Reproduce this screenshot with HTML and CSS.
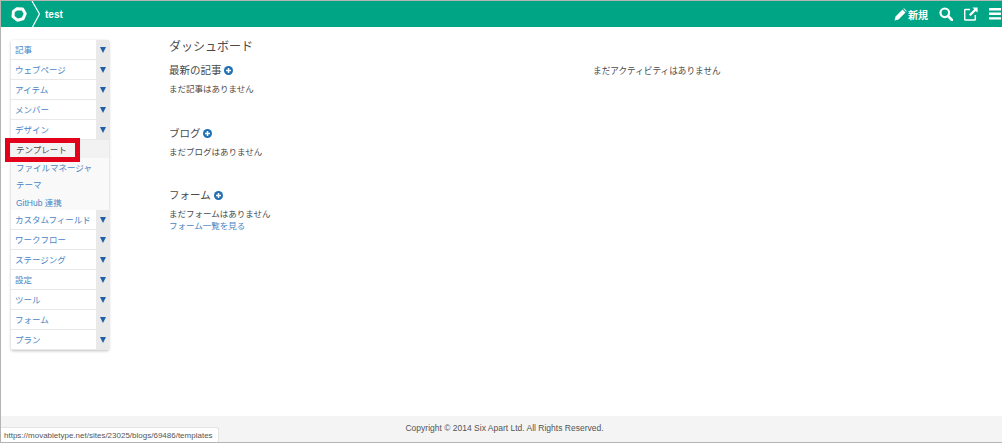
FILE: index.html
```html
<!DOCTYPE html>
<html lang="ja">
<head>
<meta charset="utf-8">
<title>test</title>
<link rel="stylesheet" href="styles.css">
</head>
<body>
<div class="frame">
  <header class="topbar">
    <div class="brand">
      <svg class="logo" width="16" height="15" viewBox="0 0 16 15"><path d="M6 1.8 11.6 1.9 14.2 6.6 12 11.8 6.4 13.2 2 9.6 2.4 4.4Z" fill="none" stroke="#fff" stroke-width="3" stroke-linejoin="round"/></svg>
      <svg class="chev" width="12" height="26" viewBox="0 0 12 26"><path d="M1 0 8.5 13 1.5 26" fill="none" stroke="#fff" stroke-width="1.2"/></svg>
      <span class="site">test</span>
    </div>
    <div class="tools">
      <span class="new">
        <svg width="13" height="13" viewBox="0 0 13 13"><path d="M0.5 12.5 1.5 8.5 8.5 1.5 11.5 4.5 4.5 11.5Z M9.3 0.8 10 0.3 12.7 3 12.2 3.7Z" fill="#fff"/></svg>
        新規
      </span>
      <svg class="ico" width="14" height="14" viewBox="0 0 14 14"><circle cx="5.8" cy="5.8" r="4.3" fill="none" stroke="#fff" stroke-width="2.2"/><path d="M9 9 13 13" stroke="#fff" stroke-width="2.6" stroke-linecap="round"/></svg>
      <svg class="ico" width="14" height="14" viewBox="0 0 14 14"><path d="M6 2.5H1.5a.8.8 0 0 0-.8.8v9a.8.8 0 0 0 .8.8h9a.8.8 0 0 0 .8-.8V8" fill="none" stroke="#fff" stroke-width="1.5"/><path d="M8.5 0.5H13.6V5.6L11.8 3.9 6.6 9.1 5 7.5 10.2 2.3Z" fill="#fff"/></svg>
      <svg class="ico" width="12" height="12" viewBox="0 0 12 12"><path d="M0 0h12v2.4H0zM0 4.6h12V7H0zM0 9.2h12v2.4H0z" fill="#fff"/></svg>
    </div>
  </header>

  <div class="content">
    <nav class="side">
      <a class="item"><span>記事</span><i class="drop"><b></b></i></a>
      <a class="item"><span>ウェブページ</span><i class="drop"><b></b></i></a>
      <a class="item"><span>アイテム</span><i class="drop"><b></b></i></a>
      <a class="item"><span>メンバー</span><i class="drop"><b></b></i></a>
      <a class="item"><span>デザイン</span><i class="drop"><b></b></i></a>
      <div class="sub">
        <a class="subitem current">テンプレート</a>
        <a class="subitem">ファイルマネージャ</a>
        <a class="subitem">テーマ</a>
        <a class="subitem">GitHub 連携</a>
      </div>
      <a class="item"><span>カスタムフィールド</span><i class="drop"><b></b></i></a>
      <a class="item"><span>ワークフロー</span><i class="drop"><b></b></i></a>
      <a class="item"><span>ステージング</span><i class="drop"><b></b></i></a>
      <a class="item"><span>設定</span><i class="drop"><b></b></i></a>
      <a class="item"><span>ツール</span><i class="drop"><b></b></i></a>
      <a class="item"><span>フォーム</span><i class="drop"><b></b></i></a>
      <a class="item"><span>プラン</span><i class="drop"><b></b></i></a>
    </nav>

    <main class="main">
      <h1>ダッシュボード</h1>
      <div class="cols">
        <div class="left">
          <section>
            <h2>最新の記事 <svg class="plus" width="9" height="9" viewBox="0 0 10 10"><circle cx="5" cy="5" r="5" fill="#1f6fb5"/><path d="M5 2.2v5.6M2.2 5h5.6" stroke="#fff" stroke-width="1.7"/></svg></h2>
            <p>まだ記事はありません</p>
          </section>
          <section>
            <h2>ブログ <svg class="plus" width="9" height="9" viewBox="0 0 10 10"><circle cx="5" cy="5" r="5" fill="#1f6fb5"/><path d="M5 2.2v5.6M2.2 5h5.6" stroke="#fff" stroke-width="1.7"/></svg></h2>
            <p>まだブログはありません</p>
          </section>
          <section>
            <h2>フォーム <svg class="plus" width="9" height="9" viewBox="0 0 10 10"><circle cx="5" cy="5" r="5" fill="#1f6fb5"/><path d="M5 2.2v5.6M2.2 5h5.6" stroke="#fff" stroke-width="1.7"/></svg></h2>
            <p>まだフォームはありません</p>
            <a class="link">フォーム一覧を見る</a>
          </section>
        </div>
        <div class="right">まだアクティビティはありません</div>
      </div>
    </main>
  </div>

  <footer class="foot">Copyright © 2014 Six Apart Ltd. All Rights Reserved.</footer>
  <div class="status">https://movabletype.net/sites/23025/blogs/69486/templates</div>
</div>
</body>
</html>
```
FILE: styles.css
```css
*, *::after { box-sizing: border-box; }
html, body { margin: 0; height: 100%; }
body { font-family: "Liberation Sans", "Noto Sans CJK JP", sans-serif; color: #4a4a4a; background: #fff; overflow: hidden; }
.frame { position: relative; height: 443px; border: 1px solid #b4b4b0; border-right: 0; display: flex; flex-direction: column; }
.topbar { height: 26px; background: #00a586; display: flex; justify-content: space-between; align-items: center; color: #fff; flex: none; }
.brand { display: flex; align-items: center; padding-left: 10px; }
.logo { display: block; }
.chev { display: block; margin-left: 4px; }
.site { font-size: 10px; font-weight: bold; margin-left: 2px; }
.tools { display: flex; align-items: center; gap: 11px; padding-right: 1px; }
.new { display: flex; align-items: center; gap: 1px; font-size: 10px; font-weight: bold; }
.ico { display: block; }
.content { flex: 1; display: flex; min-height: 0; padding: 13px 0 0 10px; }
.side { width: 98px; flex: none; box-shadow: 0 1px 3px rgba(0,0,0,.25); border-radius: 2px; background: #fff; align-self: flex-start; }
.item { display: flex; height: 20px; font-size: 8.5px; color: #4a86c5; border-bottom: 1px solid #e8e8e8; }
.item span { flex: 1; padding: 0 0 0 4px; line-height: 21px; }
.drop { width: 13px; background: #e9e9e9; display: flex; align-items: center; justify-content: center; }
.drop b { width: 0; height: 0; border-left: 3px solid transparent; border-right: 3px solid transparent; border-top: 6px solid #1f5fa8; }
.sub { height: 70px; background: #f9f9f9; display: flex; flex-direction: column; }
.subitem { height: 17.5px; line-height: 20px; font-size: 8.5px; padding-left: 5px; color: #4a86c5; }
.current { position: relative; color: #4a4a4a; background: #f2f2f2; }
.current::after { content: ""; position: absolute; left: -6px; top: -2px; width: 75px; height: 24px; border: 5px solid #e3001b; }
.main { flex: 1; padding: 0 0 0 60px; }
h1 { font-size: 12px; font-weight: normal; margin: 0 0 9px; line-height: 15px; }
.cols { display: flex; }
.left { width: 424px; }
section { height: 62.5px; }
h2 { font-size: 10.5px; font-weight: normal; margin: 0 0 6px; line-height: 13px; }
.plus { vertical-align: -1px; }
p { font-size: 8.5px; margin: 0; line-height: 12px; }
.link { display: block; font-size: 8.5px; line-height: 12px; color: #4a86c5; }
.right { font-size: 8.65px; line-height: 12px; padding-top: 1px; }
.foot { height: 26px; flex: none; background: #f4f4f4; text-align: center; font-size: 8.5px; line-height: 25px; color: #555; padding-left: 6px; }
.status { position: absolute; left: 0; bottom: 0; width: 218px; height: 15px; background: #fff; border: 1px solid #e4e4e4; border-left: 0; border-bottom: 0; border-radius: 0 3px 0 0; font-size: 8px; line-height: 15px; padding-left: 3px; color: #555; white-space: nowrap; }
```
